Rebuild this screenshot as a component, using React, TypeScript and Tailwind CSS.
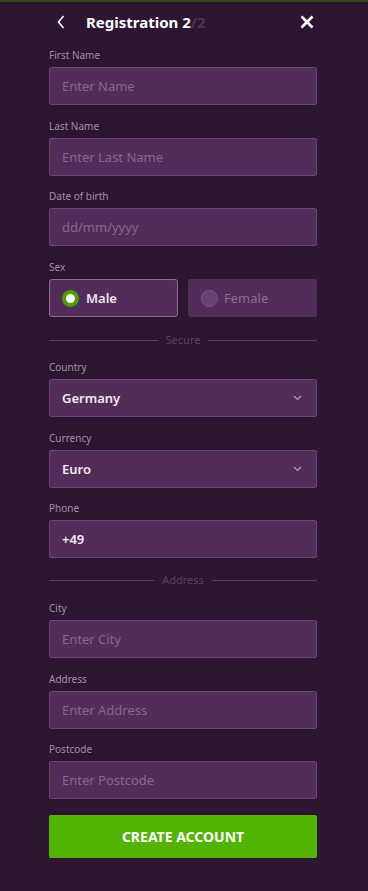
import React from "react";

const font = { fontFamily: '"Noto Sans", "Open Sans", sans-serif' };

function Label({ children }: { children: React.ReactNode }) {
  return (
    <div className="h-[12px] text-[10px] leading-[12px] text-[#a68cab] mb-[6px]">{children}</div>
  );
}

function TextInput({ placeholder }: { placeholder: string }) {
  return (
    <div className="h-[38px] rounded-[2px] border border-[#6d4475] bg-[#532d5a] flex items-center px-[12px] pt-[2px] text-[13px] text-[#876690]">
      {placeholder}
    </div>
  );
}

function ValueBox({ value, select }: { value: string; select?: boolean }) {
  return (
    <div className="h-[38px] rounded-[2px] border border-[#6d4475] bg-[#532d5a] flex items-center justify-between px-[12px] text-[13px] font-semibold text-[#f1e9f2]">
      <span className="pt-[2px]">{value}</span>
      {select && (
        <svg width="9" height="6" viewBox="0 0 9 6" className="mr-[2px]">
          <path d="M1 1 L4.5 4.5 L8 1" fill="none" stroke="#b69dbb" strokeWidth="1.1" />
        </svg>
      )}
    </div>
  );
}

function Divider({ text }: { text: string }) {
  return (
    <div className="h-[14px] flex items-center gap-[8px]">
      <div className="flex-1 h-px bg-[#5b3a63]" />
      <span className="text-[11px] leading-[14px] text-[#5e3e68]">{text}</span>
      <div className="flex-1 h-px bg-[#5b3a63]" />
    </div>
  );
}

export default function App() {
  return (
    <div className="w-[368px] min-h-[891px] bg-[#2d1631] flex flex-col" style={font}>
      <div className="h-[2px] bg-[#2f4a1c]" />
      <div className="pl-[49px] pr-[51px] flex flex-col">
        <div className="h-[40px] flex items-center relative">
          <svg width="8" height="14" viewBox="0 0 8 14" className="absolute left-[8px] top-[13px]">
            <path d="M6.5 1 L1.5 7 L6.5 13" fill="none" stroke="#ffffff" strokeWidth="1.6" />
          </svg>
          <div className="ml-[37px] text-[15px] font-bold text-white leading-none">
            Registration 2<span className="text-[#4e3656]">/2</span>
          </div>
          <svg width="14" height="14" viewBox="0 0 14 14" className="absolute right-[3px] top-[13px]">
            <path d="M1.5 1.5 L12.5 12.5 M12.5 1.5 L1.5 12.5" fill="none" stroke="#ffffff" strokeWidth="2.6" />
          </svg>
        </div>

        <div className="mt-[7px]">
          <Label>First Name</Label>
          <TextInput placeholder="Enter Name" />
        </div>
        <div className="mt-[15px]">
          <Label>Last Name</Label>
          <TextInput placeholder="Enter Last Name" />
        </div>
        <div className="mt-[14px]">
          <Label>Date of birth</Label>
          <TextInput placeholder="dd/mm/yyyy" />
        </div>
        <div className="mt-[15px]">
          <Label>Sex</Label>
          <div className="flex gap-[10px]">
            <div className="flex-1 h-[38px] rounded-[3px] border border-[#8a6a92] bg-[#532d5a] flex items-center px-[12px] gap-[7px]">
              <div className="w-[17px] h-[17px] rounded-full bg-[#4b9b08] flex items-center justify-center">
                <div className="w-[9px] h-[9px] rounded-full bg-white" />
              </div>
              <span className="text-[13px] font-semibold text-[#ece2ee] pt-[1px]">Male</span>
            </div>
            <div className="flex-1 h-[38px] rounded-[3px] bg-[#532d5a] flex items-center px-[13px] gap-[6px]">
              <div className="w-[17px] h-[17px] rounded-full bg-[#6b3f75] border border-[#7e5688]" />
              <span className="text-[13px] text-[#8b6c94] pt-[1px]">Female</span>
            </div>
          </div>
        </div>

        <div className="mt-[16px]">
          <Divider text="Secure" />
        </div>

        <div className="mt-[14px]">
          <Label>Country</Label>
          <ValueBox value="Germany" select />
        </div>
        <div className="mt-[15px]">
          <Label>Currency</Label>
          <ValueBox value="Euro" select />
        </div>
        <div className="mt-[14px]">
          <Label>Phone</Label>
          <ValueBox value="+49" />
        </div>

        <div className="mt-[15px]">
          <Divider text="Address" />
        </div>

        <div className="mt-[15px]">
          <Label>City</Label>
          <TextInput placeholder="Enter City" />
        </div>
        <div className="mt-[15px]">
          <Label>Address</Label>
          <TextInput placeholder="Enter Address" />
        </div>
        <div className="mt-[14px]">
          <Label>Postcode</Label>
          <TextInput placeholder="Enter Postcode" />
        </div>

        <div className="mt-[16px] h-[43px] rounded-[2px] bg-[#52b400] flex items-center justify-center text-[14px] font-bold text-white">
          CREATE ACCOUNT
        </div>
      </div>
    </div>
  );
}
